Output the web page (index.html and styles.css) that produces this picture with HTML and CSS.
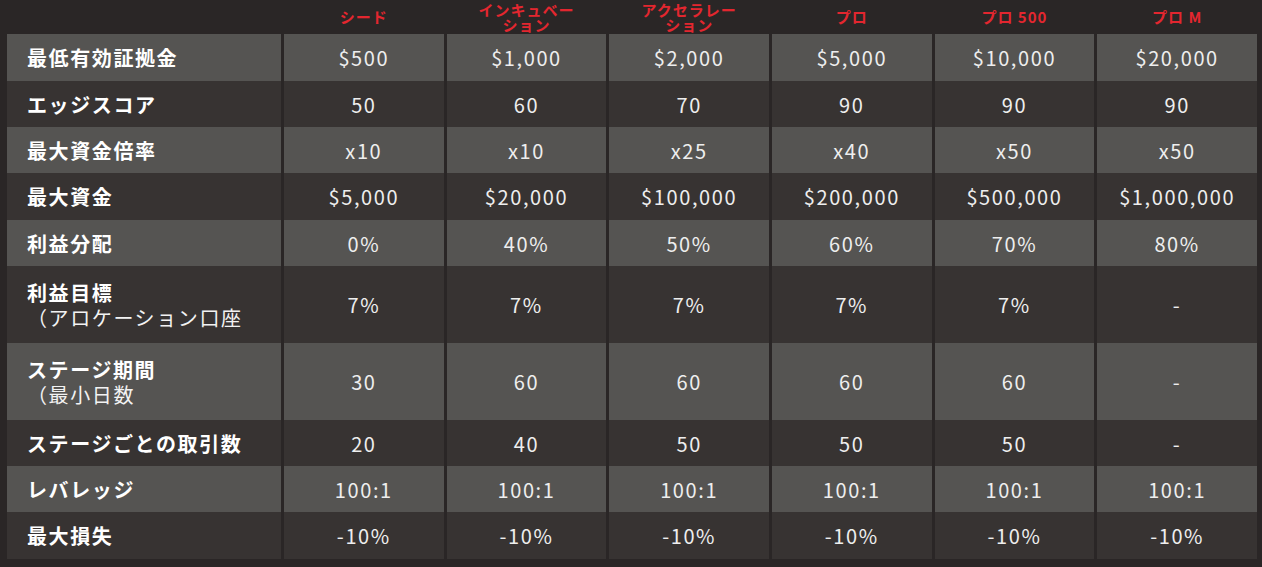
FILE: index.html
```html
<!DOCTYPE html>
<html lang="ja">
<head>
<meta charset="utf-8">
<title>プラン比較</title>
<link rel="stylesheet" href="styles.css">
</head>
<body>
<table class="plans">
  <colgroup>
    <col class="col-label">
    <col><col><col><col><col><col>
  </colgroup>
  <thead>
    <tr class="head-row">
      <th class="corner"></th>
      <th class="plan">シード</th>
      <th class="plan">インキュベー<br>ション</th>
      <th class="plan">アクセラレー<br>ション</th>
      <th class="plan">プロ</th>
      <th class="plan">プロ 500</th>
      <th class="plan">プロ M</th>
    </tr>
  </thead>
  <tbody>
    <tr class="row light h47">
      <th class="label">最低有効証拠金</th>
      <td>$500</td><td>$1,000</td><td>$2,000</td><td>$5,000</td><td>$10,000</td><td>$20,000</td>
    </tr>
    <tr class="row dark h46">
      <th class="label">エッジスコア</th>
      <td>50</td><td>60</td><td>70</td><td>90</td><td>90</td><td>90</td>
    </tr>
    <tr class="row light h46">
      <th class="label">最大資金倍率</th>
      <td>x10</td><td>x10</td><td>x25</td><td>x40</td><td>x50</td><td>x50</td>
    </tr>
    <tr class="row dark h47">
      <th class="label">最大資金</th>
      <td>$5,000</td><td>$20,000</td><td>$100,000</td><td>$200,000</td><td>$500,000</td><td>$1,000,000</td>
    </tr>
    <tr class="row light h46">
      <th class="label">利益分配</th>
      <td>0%</td><td>40%</td><td>50%</td><td>60%</td><td>70%</td><td>80%</td>
    </tr>
    <tr class="row dark h77">
      <th class="label">利益目標<span class="sub">（アロケーション口座</span></th>
      <td>7%</td><td>7%</td><td>7%</td><td>7%</td><td>7%</td><td>-</td>
    </tr>
    <tr class="row light h77">
      <th class="label">ステージ期間<span class="sub">（最小日数</span></th>
      <td>30</td><td>60</td><td>60</td><td>60</td><td>60</td><td>-</td>
    </tr>
    <tr class="row dark h46">
      <th class="label">ステージごとの取引数</th>
      <td>20</td><td>40</td><td>50</td><td>50</td><td>50</td><td>-</td>
    </tr>
    <tr class="row light h46">
      <th class="label">レバレッジ</th>
      <td>100:1</td><td>100:1</td><td>100:1</td><td>100:1</td><td>100:1</td><td>100:1</td>
    </tr>
    <tr class="row dark h47">
      <th class="label">最大損失</th>
      <td>-10%</td><td>-10%</td><td>-10%</td><td>-10%</td><td>-10%</td><td>-10%</td>
    </tr>
  </tbody>
</table>
</body>
</html>
```

FILE: styles.css
```css
html, body {
  margin: 0;
  padding: 0;
  background: #2a2626;
}

body {
  font-family: "Noto Sans CJK JP", "Noto Sans", sans-serif;
  color: #f2f2f2;
}

.plans {
  margin-left: 4px;
  width: 1256px;
  table-layout: fixed;
  border-collapse: separate;
  border-spacing: 3px 0;
}

.col-label {
  width: 274px;
}

.head-row {
  height: 34px;
}

.plan {
  padding: 0 0 1px;
  color: #e3262f;
  font-size: 15px;
  line-height: 15px;
  font-weight: 700;
  letter-spacing: 1px;
  text-align: center;
  vertical-align: middle;
}

.row.light > * {
  background: #555452;
}

.row.dark > * {
  background: #373332;
}

.h46 { height: 46px; }
.h47 { height: 47px; }
.h77 { height: 77px; }

.row > td,
.row > th {
  padding: 0;
  vertical-align: middle;
}

.label {
  padding-left: 20px !important;
  text-align: left;
  font-size: 20px;
  line-height: 25px;
  font-weight: 700;
  letter-spacing: 1.6px;
  color: #ffffff;
}

.sub {
  display: block;
  font-weight: 400;
  color: #f2f2f2;
}

.row > td {
  text-align: center;
  font-size: 20px;
  font-weight: 400;
  letter-spacing: 1.6px;
  color: #eeeeee;
}
```
